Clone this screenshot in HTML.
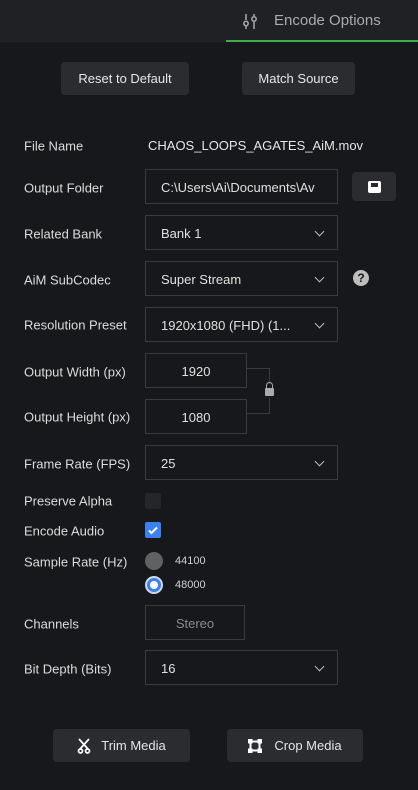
<!DOCTYPE html>
<html><head><style>
*{box-sizing:border-box;margin:0;padding:0}
body{width:418px;height:790px;background:#17181b;font-family:"Liberation Sans",sans-serif;color:#dcdcdc;position:relative;overflow:hidden;font-size:13px}
.hdr{position:absolute;left:0;top:0;width:418px;height:42px;background:#1f2125}
.tab{position:absolute;left:226px;top:0;width:192px;height:42px;border-bottom:2px solid #3cae4a}
.tab span{position:absolute;left:48px;top:12px;font-size:15px;color:#a9abae}
.btn{position:absolute;background:#2b2c30;border-radius:4px;color:#e6e6e6;font-size:13px;display:flex;align-items:center;justify-content:center}
.lbl{position:absolute;left:24px;font-size:13px;color:#dcdcdc;transform:translateY(-50%);margin-top:1px}
.in{position:absolute;left:145px;width:193px;height:35px;border:1px solid #3a3b3f;background:#17181b;font-size:13px;color:#e0e0e0;padding-left:15px;padding-top:1px;display:flex;align-items:center}
.chev{position:absolute;right:14px;top:12px;width:7px;height:7px;border-right:1.5px solid #bbb;border-bottom:1.5px solid #bbb;transform:rotate(45deg)}
.c{justify-content:center;padding-left:0}
</style></head><body>
<div class="hdr"></div>
<div class="tab">
<svg style="position:absolute;left:16px;top:13px" width="18" height="18" viewBox="0 0 18 18" fill="none" stroke="#a9abae" stroke-width="1.5"><line x1="4" y1="1" x2="4" y2="7"/><circle cx="4" cy="10.5" r="2.2"/><line x1="4" y1="13" x2="4" y2="16"/><line x1="12" y1="1" x2="12" y2="3"/><circle cx="12" cy="6" r="2.2"/><line x1="12" y1="8.5" x2="12" y2="16"/></svg>
<span>Encode Options</span></div>
<div class="btn" style="left:61px;top:62px;width:128px;height:33px">Reset to Default</div>
<div class="btn" style="left:242px;top:62px;width:113px;height:33px">Match Source</div>

<div class="lbl" style="top:145px">File Name</div>
<div style="position:absolute;left:148px;top:138px;font-size:13px;color:#e6e6e6">CHAOS_LOOPS_AGATES_AiM.mov</div>

<div class="lbl" style="top:187px">Output Folder</div>
<div class="in" style="top:169px;overflow:hidden;white-space:nowrap">C:\Users\Ai\Documents\Av</div>
<div class="btn" style="left:352px;top:172px;width:44px;height:29px"><div style="width:13px;height:12px;background:#fff;border-radius:2px;position:relative"><div style="position:absolute;left:3px;top:2px;width:7px;height:4px;background:#2b2c30"></div></div></div>

<div class="lbl" style="top:233px">Related Bank</div>
<div class="in" style="top:215px">Bank 1<div class="chev"></div></div>

<div class="lbl" style="top:279px">AiM SubCodec</div>
<div class="in" style="top:261px">Super Stream<div class="chev"></div></div>
<div style="position:absolute;left:353px;top:270px;width:16px;height:16px;border-radius:50%;background:#bdbdbd;color:#17181b;font-weight:bold;font-size:12px;text-align:center;line-height:16px">?</div>

<div class="lbl" style="top:324px">Resolution Preset</div>
<div class="in" style="top:307px">1920x1080 (FHD) (1...<div class="chev"></div></div>

<div class="lbl" style="top:371px">Output Width (px)</div>
<div class="in c" style="top:353px;width:102px">1920</div>
<div class="lbl" style="top:416px">Output Height (px)</div>
<div class="in c" style="top:399px;width:102px">1080</div>
<div style="position:absolute;left:247px;top:368px;width:23px;height:46px;border:1px solid #3a3b3f;border-left:none"></div>
<div style="position:absolute;left:264px;top:384px;width:11px;height:14px;background:#17181b"></div>
<div style="position:absolute;left:266px;top:382px;width:7px;height:7px;border:1.5px solid #aaa;border-bottom:none;border-radius:4px 4px 0 0"></div>
<div style="position:absolute;left:265px;top:388px;width:9px;height:8px;background:#aaa;border-radius:1px"></div>

<div class="lbl" style="top:463px">Frame Rate (FPS)</div>
<div class="in" style="top:445px">25<div class="chev"></div></div>

<div class="lbl" style="top:500px">Preserve Alpha</div>
<div style="position:absolute;left:145px;top:493px;width:16px;height:16px;background:#25262a;border-radius:2px"></div>
<div class="lbl" style="top:530px">Encode Audio</div>
<div style="position:absolute;left:145px;top:522px;width:16px;height:16px;background:#3b82f0;border-radius:2px"><svg width="16" height="16" viewBox="0 0 16 16"><path d="M4 8.5l2.5 2.5 5.5-5.5" stroke="#fff" stroke-width="2" fill="none"/></svg></div>

<div class="lbl" style="top:561px">Sample Rate (Hz)</div>
<div style="position:absolute;left:145px;top:552px;width:18px;height:18px;border-radius:50%;background:#606163"></div>
<div style="position:absolute;left:175px;top:555px;font-size:11px;color:#cfcfcf">44100</div>
<div style="position:absolute;left:145px;top:576px;width:18px;height:18px;border-radius:50%;background:#3b82f0;border:2px solid #cfd8e8"><div style="position:absolute;left:3px;top:3px;width:8px;height:8px;border-radius:50%;background:#fff"></div></div>
<div style="position:absolute;left:175px;top:579px;font-size:11px;color:#cfcfcf">48000</div>

<div class="lbl" style="top:623px">Channels</div>
<div class="in c" style="top:605px;width:100px;color:#8a8b8e">Stereo</div>

<div class="lbl" style="top:668px">Bit Depth (Bits)</div>
<div class="in" style="top:650px">16<div class="chev"></div></div>

<div class="btn" style="left:53px;top:729px;width:137px;height:33px"><svg width="14" height="16" viewBox="0 0 14 16" style="margin-right:10px" fill="none" stroke="#fff" stroke-width="1.7"><path d="M2 1l9 10M12 1L3 11"/><circle cx="3.5" cy="13" r="2"/><circle cx="10.5" cy="13" r="2"/></svg>Trim Media</div>
<div class="btn" style="left:227px;top:729px;width:136px;height:33px"><svg width="14" height="14" viewBox="0 0 14 14" style="margin-right:12px" fill="none" stroke="#fff" stroke-width="2"><rect x="2.5" y="2.5" width="9" height="9"/><rect x="0.5" y="0.5" width="3" height="3" fill="#fff"/><rect x="10.5" y="0.5" width="3" height="3" fill="#fff"/><rect x="0.5" y="10.5" width="3" height="3" fill="#fff"/><rect x="10.5" y="10.5" width="3" height="3" fill="#fff"/></svg>Crop Media</div>
</body></html>
